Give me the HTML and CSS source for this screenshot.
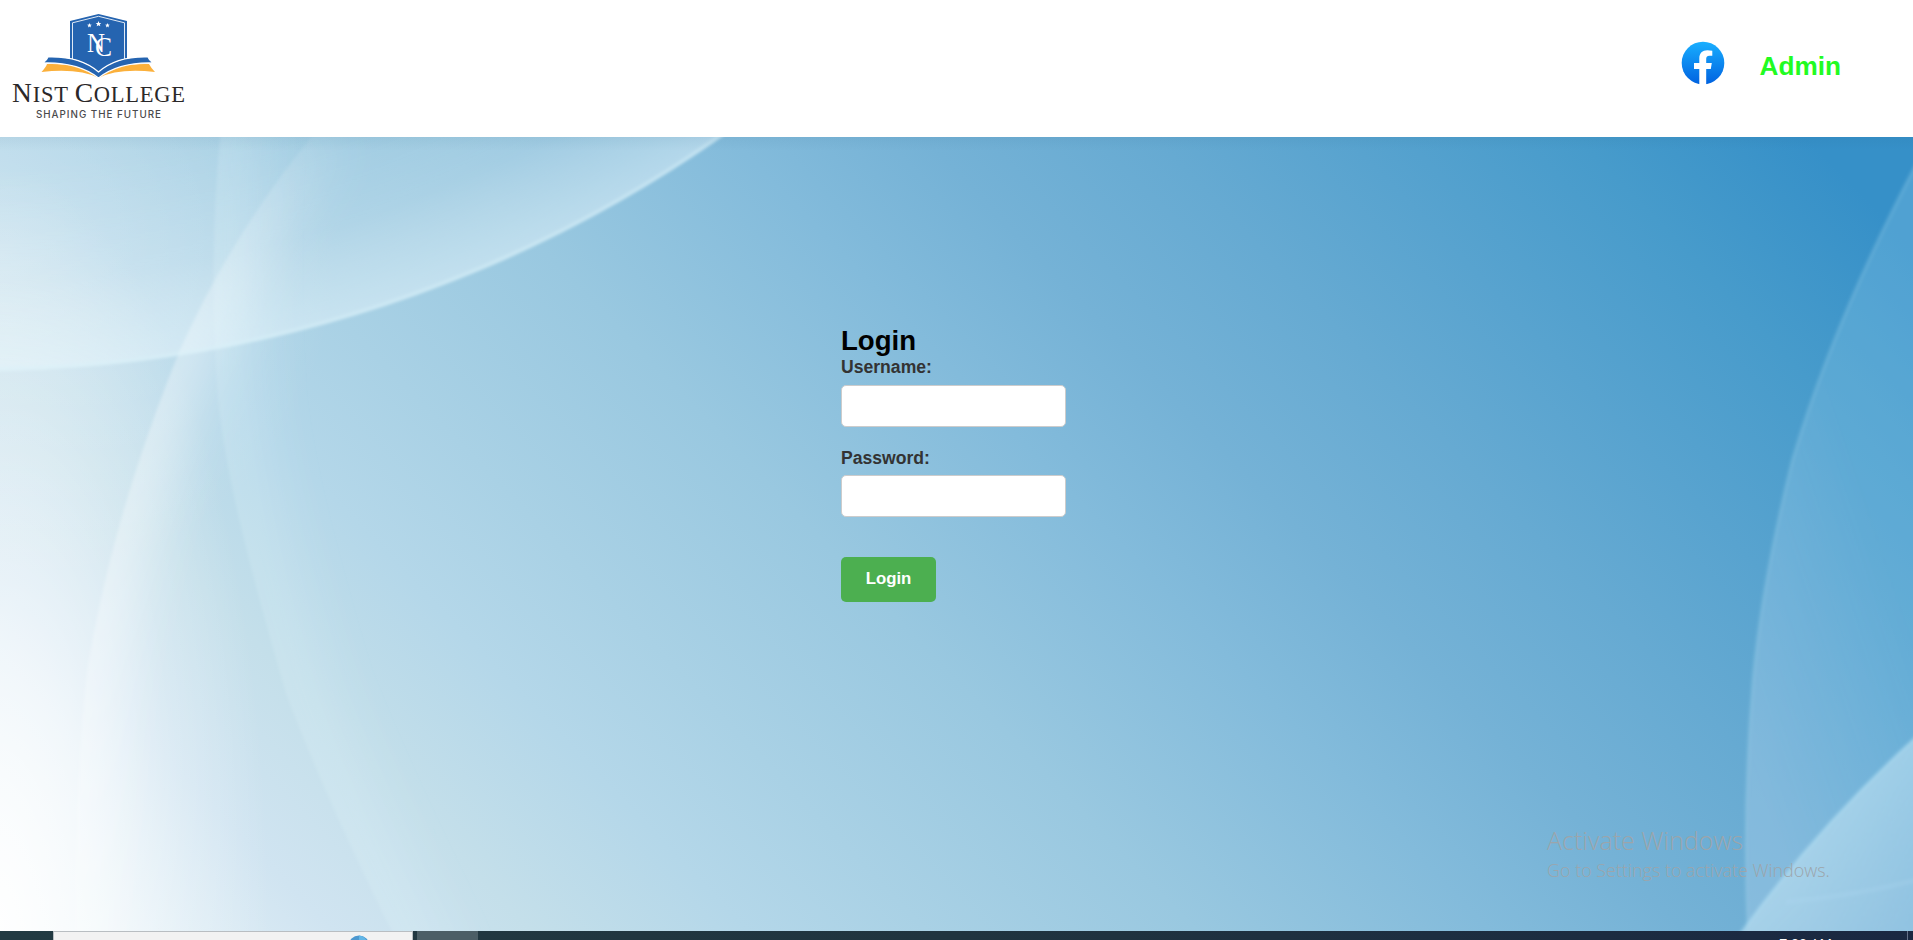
FILE: index.html
```html
<!DOCTYPE html>
<html lang="en">
<head>
<meta charset="utf-8">
<title>Nist College - Login</title>
<link rel="stylesheet" href="styles.css">
</head>
<body>
<div class="page">
  <header class="header">
    <svg class="logo" width="200" height="130" viewBox="0 0 200 130" role="img" aria-label="Nist College">
      <path d="M70 21L98.500 14L127 21V58Q110 62 98.500 72Q87 62 70 58Z" fill="#2564b0"/>
      <path d="M72.500 60V22.800L98.500 16.300L124.500 22.800V60" fill="none" stroke="#dfe9f5" stroke-width="1"/>
      <path d="M41.500 72Q46 67 47 64Q80 63 98.500 76Q117 63 149 64Q151 68 155 72Q118 68 98.500 78Q79 68 41.500 72Z" fill="#fbb03b"/>
      <path d="M43 63Q47 60 48 57Q80 56 98.500 72Q117 56 148 57Q149 60 153 63Q119 62 98.500 78Q78 62 43 63Z" fill="#2564b0" stroke="#fff" stroke-width="1.200"/>
      <g fill="#fff"><path d="M98.500 21l.8 1.900 2 .1-1.500 1.300.5 2-1.800-1.100-1.800 1.100.5-2-1.500-1.300 2-.1z"/><path d="M89.500 23l.6 1.600 1.700.1-1.300 1 .4 1.700-1.400-.9-1.500.9.4-1.700-1.300-1 1.800-.1zM107.500 23l.6 1.600 1.700.1-1.300 1 .4 1.700-1.400-.9-1.500.9.4-1.700-1.300-1 1.800-.1z"/></g>
      <text class="logo-mono" x="87" y="52" textLength="18" lengthAdjust="spacingAndGlyphs">N</text>
      <text class="logo-mono" x="95" y="56" textLength="17" lengthAdjust="spacingAndGlyphs">C</text>
      <text class="logo-name" x="12" y="102" textLength="173"><tspan class="logo-cap">N</tspan>IST <tspan class="logo-cap">C</tspan>OLLEGE</text>
      <text class="logo-tag" x="36" y="118" textLength="125">SHAPING THE FUTURE</text>
    </svg>
    <nav class="nav">
      <svg class="facebook" width="44" height="44" viewBox="0 0 44 44" role="img" aria-label="Facebook">
        <defs><linearGradient id="fb" x1="0" y1="0" x2="0" y2="1"><stop offset="0" stop-color="#19afff"/><stop offset="1" stop-color="#0062e0"/></linearGradient></defs>
        <circle cx="22" cy="22" r="21.300" fill="url(#fb)"/>
        <path d="M18.300 44V28H13v-6h5.300v-4.500c0-5.600 3.200-8.300 8-8.300 2 0 3.500.2 5 .5v5.100h-2.800c-2.700 0-3.300 1.400-3.300 3.100V22h5.600l-1 6h-4.600v16z" fill="#fff"/>
      </svg>
      <a class="admin">Admin</a>
    </nav>
  </header>
  <main class="main">
    <svg class="wallpaper" width="1913" height="794" viewBox="0 0 1913 794" aria-hidden="true">
      <defs>
        <linearGradient id="sky" gradientUnits="userSpaceOnUse" x1="-395" y1="378" x2="942" y2="-903">
          <stop offset="0" stop-color="#eef7fa"/><stop offset=".128" stop-color="#d0e4f1"/><stop offset=".206" stop-color="#c4dfea"/><stop offset=".29" stop-color="#b4d7e9"/><stop offset=".36" stop-color="#a9d1e5"/><stop offset=".465" stop-color="#99c8e0"/><stop offset=".58" stop-color="#83bbdb"/><stop offset=".655" stop-color="#75b2d6"/><stop offset=".745" stop-color="#66aad2"/><stop offset=".82" stop-color="#58a3cf"/><stop offset=".91" stop-color="#479bcb"/><stop offset="1" stop-color="#3690c8"/>
        </linearGradient>
        <radialGradient id="glow" gradientUnits="userSpaceOnUse" cx="0" cy="0" r="1" gradientTransform="translate(0 790) scale(270 760)"><stop offset="0" stop-color="#fff" stop-opacity=".95"/><stop offset=".35" stop-color="#fff" stop-opacity=".65"/><stop offset=".7" stop-color="#fff" stop-opacity=".25"/><stop offset="1" stop-color="#fff" stop-opacity="0"/></radialGradient>
        <radialGradient id="dawn" gradientUnits="userSpaceOnUse" cx="0" cy="120" r="340"><stop offset="0" stop-color="#fff" stop-opacity=".26"/><stop offset="1" stop-color="#fff" stop-opacity="0"/></radialGradient>
        <radialGradient id="arc" gradientUnits="userSpaceOnUse" cx="-20" cy="-1059" r="1293"><stop offset=".84" stop-color="#fff" stop-opacity="0"/><stop offset=".93" stop-color="#fff" stop-opacity=".14"/><stop offset="1" stop-color="#eefaff" stop-opacity=".44"/></radialGradient>
        <linearGradient id="ribbon" gradientUnits="userSpaceOnUse" x1="0" y1="0" x2="0" y2="794"><stop offset="0" stop-color="#fff" stop-opacity=".1"/><stop offset=".25" stop-color="#fff" stop-opacity=".36"/><stop offset=".6" stop-color="#fff" stop-opacity=".32"/><stop offset="1" stop-color="#fff" stop-opacity=".15"/></linearGradient>
        <linearGradient id="pane" gradientUnits="userSpaceOnUse" x1="1745" y1="600" x2="1925" y2="540"><stop offset="0" stop-color="#a3cbe8" stop-opacity=".45"/><stop offset="1" stop-color="#8cc8e8" stop-opacity=".3"/></linearGradient>
        <linearGradient id="corner" gradientUnits="userSpaceOnUse" x1="1800" y1="700" x2="1900" y2="794"><stop offset="0" stop-color="#b8def0" stop-opacity=".7"/><stop offset="1" stop-color="#a2cce6" stop-opacity=".6"/></linearGradient>
        <linearGradient id="shade" x1="0" y1="0" x2="0" y2="1"><stop offset="0" stop-color="#164e70" stop-opacity=".06"/><stop offset="1" stop-color="#164e70" stop-opacity="0"/></linearGradient>
        <filter id="soft" filterUnits="userSpaceOnUse" x="-50" y="-50" width="2013" height="894"><feGaussianBlur stdDeviation="1.500"/></filter>
        <filter id="haze" filterUnits="userSpaceOnUse" x="-100" y="-100" width="900" height="1000"><feGaussianBlur stdDeviation="24"/></filter>
        <clipPath id="right-a"><path d="M320 -10Q235 90 179 215C135 325 105 425 87 535Q75 650 75 800H700V-10Z"/></clipPath>
        <clipPath id="right-b"><path d="M221 -10Q208 120 218 262C228 350 250 430 286 556Q325 660 395 800H800V-10Z"/></clipPath>
      </defs>
      <rect width="1913" height="794" fill="url(#sky)"/>
      <rect width="300" height="794" fill="url(#glow)"/>
      <rect width="340" height="460" fill="url(#dawn)"/>
      <g filter="url(#soft)"><g clip-path="url(#right-a)"><path d="M320 -10Q235 90 179 215C135 325 105 425 87 535Q75 650 75 850" fill="none" stroke="url(#ribbon)" stroke-width="70" filter="url(#haze)"/></g></g>
      <g filter="url(#soft)"><g clip-path="url(#right-b)"><path d="M221 -60Q208 120 218 262C228 350 250 430 286 556Q325 660 420 850" fill="none" stroke="#e4f5f8" stroke-opacity=".2" stroke-width="80" filter="url(#haze)"/></g></g>
      <g filter="url(#soft)">
        <circle cx="-20" cy="-1059" r="1293" fill="url(#arc)"/>
        <circle cx="-20" cy="-1059" r="1291" fill="none" stroke="#d9f2fb" stroke-opacity=".4" stroke-width="4"/>
        <path d="M1920 20Q1835 180 1792 324Q1762 445 1753 541Q1742 670 1748 800H1930V20Z" fill="url(#pane)"/>
        <path d="M1920 20Q1835 180 1792 324Q1762 445 1753 541Q1742 670 1748 800" fill="none" stroke="#a5d6ee" stroke-opacity=".18" stroke-width="4"/>
        <path d="M1925 592Q1820 685 1738 800H1930Z" fill="url(#corner)"/>
        <path d="M1925 592Q1820 685 1738 800" fill="none" stroke="#b4e2f5" stroke-opacity=".3" stroke-width="4"/>
        <path d="M1786 765Q1860 758 1920 742" fill="none" stroke="#b4def3" stroke-opacity=".2" stroke-width="5"/>
      </g>
      <rect width="1913" height="14" fill="url(#shade)"/>
    </svg>
    <form class="form">
      <h2 class="title">Login</h2>
      <label class="label" for="user">Username:</label>
      <input class="input" id="user" type="text">
      <label class="label" for="pass">Password:</label>
      <input class="input" id="pass" type="password">
      <button class="button" type="button">Login</button>
    </form>
    <aside class="watermark">
      <p class="wm-title">Activate Windows</p>
      <p class="wm-text">Go to Settings to activate Windows.</p>
    </aside>
  </main>
  <footer class="taskbar">
    <div class="search"><svg class="globe" width="20" height="8" viewBox="0 0 20 8"><circle cx="10" cy="11" r="10.500" fill="#4c98cf"/><path d="M10 .5Q16 1 19 8H10Z" fill="#62b6e6"/></svg></div>
    <div class="task"></div>
    <span class="clock">7:00 AM</span>
    <div class="peek"></div>
  </footer>
</div>
</body>
</html>
```
FILE: styles.css
```css
* { box-sizing: border-box; margin: 0; padding: 0; }
body { font-family: "Liberation Sans", Arial, sans-serif; overflow: hidden; }
.page { width: 1913px; height: 940px; display: grid; grid-template-rows: 137px 794px 9px; overflow: hidden; }
.header { display: flex; justify-content: space-between; background: #fff; }
.logo { display: block; }
.logo-mono { font: 28px "Liberation Serif", serif; fill: #fff; }
.logo-name { font: 22.500px "Liberation Serif", serif; fill: #2b2829; }
.logo-cap { font-size: 27.500px; }
.logo-tag { font: 500 9.800px Inter, sans-serif; fill: #4a4a4c; }
.nav { display: flex; align-items: flex-start; padding: 41px 72px 0 0; gap: 35px; }
.admin { font: 700 26.200px/36px "Liberation Sans", Arial, sans-serif; color: #22fb22; margin-top: 7px; }
.main { position: relative; display: flex; justify-content: flex-start; }
.wallpaper { position: absolute; inset: 0; }
.form { position: relative; display: flex; flex-direction: column; align-items: flex-start; width: 225px; margin-left: 841px; padding-top: 188px; }
.title { font-size: 27.600px; line-height: 32px; color: #000; }
.label { font-size: 17.600px; font-weight: 700; line-height: 20px; color: #333; }
.input { width: 225px; height: 42px; margin: 8px 0 21px; border: 1px solid #ccc; border-radius: 5px; background: #fff; padding: 10px; font-size: 16px; }
#pass { margin-bottom: 40px; margin-top: 7px; }
.button { width: 95px; height: 45px; border: 0; border-radius: 5px; background: #4caf50; color: #fff; font: 700 16.800px "Liberation Sans", Arial, sans-serif; padding-bottom: 2px; }
.watermark { position: absolute; left: 1547px; top: 685px; font-family: "Open Sans", "Noto Sans", sans-serif; font-weight: 300; color: #9ca5ab; white-space: nowrap; }
.wm-title { font-size: 25px; line-height: 36px; }
.wm-text { font-size: 17.950px; line-height: 25px; }
.taskbar { display: flex; overflow: hidden; background: linear-gradient(90deg, #223a42, #20343f 50%, #1a2842); padding-left: 53px; }
.search { width: 360px; background: #f2f2f2; border: 1px solid #b9bec2; border-bottom: 0; padding: 3px 0 0 295px; }
.globe { display: block; }
.task { width: 61px; margin-left: 4px; background: #4c5e66; }
.clock { margin-left: auto; margin-right: 75px; padding-top: 3px; font: 14px/20px "Open Sans", sans-serif; color: #fff; height: 9px; }
.peek { width: 6px; border-left: 1px solid #66728a; }
```
